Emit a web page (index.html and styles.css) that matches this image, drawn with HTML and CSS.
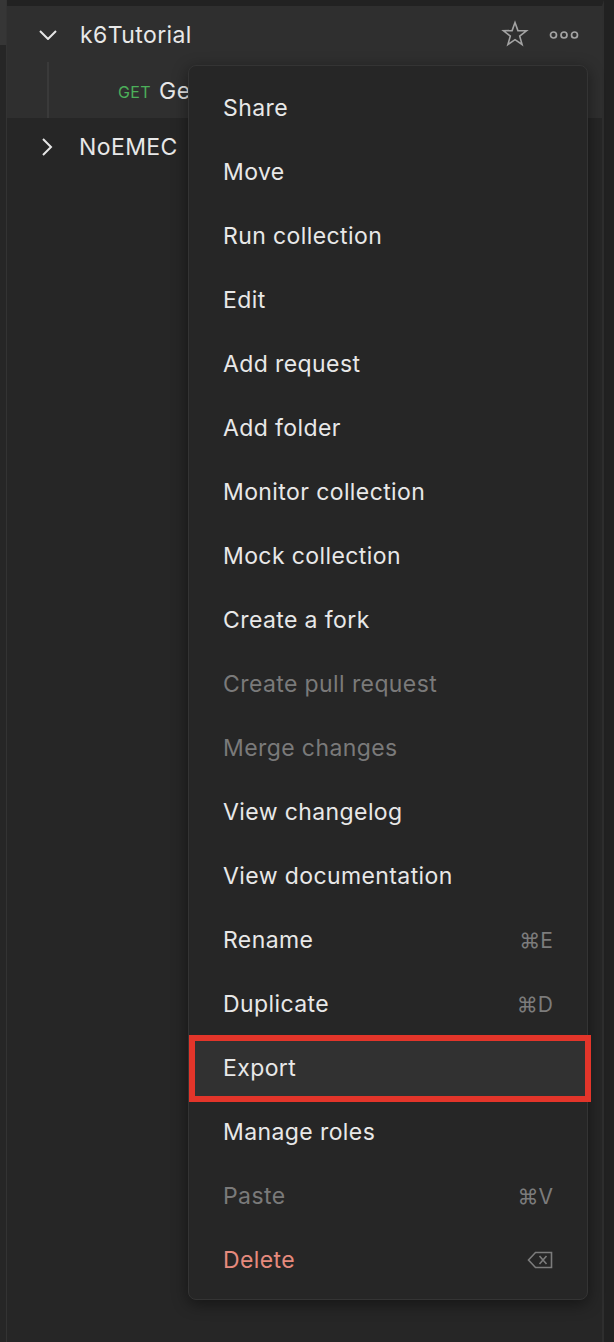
FILE: index.html
```html
<!DOCTYPE html>
<html>
<head>
<meta charset="utf-8">
<link rel="stylesheet" href="styles.css">
</head>
<body>
<div class="app">
  <div class="gutter"><div class="gutter-top"></div></div>
  <div class="sidebar">
    <div class="tree">
      <div class="row collection active">
        <span class="chev"><svg width="18" height="10" viewBox="0 0 18 10"><polyline points="1,1 9,9 17,1" fill="none" stroke="#e6e6e6" stroke-width="2"/></svg></span>
        <span class="name">k6Tutorial</span>
        <span class="actions">
          <svg class="star" width="28" height="28" viewBox="0 0 28 28"><polygon points="14,2.5 16.9,10.6 25.5,10.8 18.7,16.1 21.1,24.5 14,19.6 6.9,24.5 9.3,16.1 2.5,10.8 11.1,10.6" fill="none" stroke="#a3a3a3" stroke-width="1.6" stroke-linejoin="miter"/></svg>
          <svg class="dots" width="30" height="10" viewBox="0 0 30 10"><circle cx="4.5" cy="5" r="3" fill="none" stroke="#a3a3a3" stroke-width="1.7"/><circle cx="15" cy="5" r="3" fill="none" stroke="#a3a3a3" stroke-width="1.7"/><circle cx="25.5" cy="5" r="3" fill="none" stroke="#a3a3a3" stroke-width="1.7"/></svg>
        </span>
      </div>
      <div class="row request active">
        <span class="guide"></span>
        <span class="method">GET</span>
        <span class="name">Ge</span>
      </div>
      <div class="row collection">
        <span class="chev right"><svg width="11" height="18" viewBox="0 0 11 18"><polyline points="1,1 9,9 1,17" fill="none" stroke="#e6e6e6" stroke-width="2"/></svg></span>
        <span class="name">NoEMEC</span>
      </div>
    </div>
  </div>
  <div class="edge"></div>
</div>

<div class="menu">
  <div class="item">Share</div>
  <div class="item">Move</div>
  <div class="item">Run collection</div>
  <div class="item">Edit</div>
  <div class="item">Add request</div>
  <div class="item">Add folder</div>
  <div class="item">Monitor collection</div>
  <div class="item">Mock collection</div>
  <div class="item">Create a fork</div>
  <div class="item disabled">Create pull request</div>
  <div class="item disabled">Merge changes</div>
  <div class="item">View changelog</div>
  <div class="item">View documentation</div>
  <div class="item">Rename<span class="kbd">⌘E</span></div>
  <div class="item">Duplicate<span class="kbd">⌘D</span></div>
  <div class="item hover">Export</div>
  <div class="item">Manage roles</div>
  <div class="item disabled">Paste<span class="kbd">⌘V</span></div>
  <div class="item danger">Delete<span class="kbd"><svg width="26" height="18" viewBox="0 0 26 18"><path d="M1.5 9 L8.5 1.5 H24.5 V16.5 H8.5 Z" fill="none" stroke="#7c7c7c" stroke-width="1.6"/><path d="M12.5 5 L19.5 13 M19.5 5 L12.5 13" stroke="#7c7c7c" stroke-width="1.6"/></svg></span></div>
</div>
<div class="highlight-box"></div>
</body>
</html>
```
FILE: styles.css
```css
html, body {
  margin: 0;
  padding: 0;
}
body {
  width: 614px;
  height: 1342px;
  overflow: hidden;
  background: #262626;
  font-family: Inter, "Noto Sans", "DejaVu Sans", sans-serif;
  color: #e8e8e8;
  position: relative;
}
.app {
  display: flex;
  height: 1342px;
}
.gutter {
  width: 6px;
  background: #262626;
  border-right: 1px solid #333333;
}
.gutter-top {
  height: 45px;
  background: #363636;
}
.sidebar {
  width: 597px;
  background: #262626;
  border-right: 2px solid #2e2e2e;
  border-top: 6px solid #222222;
  box-sizing: border-box;
}
.edge {
  flex: 1;
  background: #212121;
}
.tree {
  display: flex;
  flex-direction: column;
}
.row {
  height: 56px;
  display: flex;
  align-items: center;
  position: relative;
  font-size: 23px;
  letter-spacing: 0.4px;
  padding-top: 1px;
  box-sizing: border-box;
}
.row.active {
  background: #2f2f2f;
}
.chev {
  width: 18px;
  margin-left: 32px;
  display: flex;
  justify-content: center;
}
.chev.right {
  margin-left: 35px;
  width: 11px;
  margin-right: 3px;
}
.row .name {
  margin-left: 23px;
}
.actions {
  margin-left: auto;
  margin-right: 23px;
  display: flex;
  align-items: center;
  gap: 20px;
}
.star {
  margin-top: -2px;
}
.guide {
  position: absolute;
  left: 40px;
  top: 0;
  bottom: 0;
  width: 2px;
  background: #3a3a3a;
}
.request .method {
  margin-left: 111px;
  font-size: 16px;
  color: #4caf5a;
  letter-spacing: 0.4px;
  margin-top: 2px;
}
.request .name {
  margin-left: 8px;
  white-space: nowrap;
}
.menu {
  position: absolute;
  left: 188px;
  top: 65px;
  width: 400px;
  height: 1235px;
  box-sizing: border-box;
  background: #262626;
  border: 1px solid #343434;
  border-radius: 8px;
  box-shadow: 0 4px 16px rgba(0, 0, 0, 0.45);
  padding: 10px 0 6px;
  display: flex;
  flex-direction: column;
}
.item {
  height: 64px;
  flex: none;
  display: flex;
  align-items: center;
  justify-content: space-between;
  padding: 0 34px;
  font-size: 23px;
  color: #e8e8e8;
  letter-spacing: 0.4px;
}
.item.disabled {
  color: #7a7a7a;
}
.item.danger {
  color: #e68a7d;
}
.item.hover {
  background: #313131;
}
.kbd {
  color: #7c7c7c;
  font-size: 21px;
  letter-spacing: 0;
  display: flex;
  align-items: center;
}
.highlight-box {
  position: absolute;
  left: 189px;
  top: 1035px;
  width: 402px;
  height: 67px;
  box-sizing: border-box;
  border: 6px solid #e3352a;
}
```
